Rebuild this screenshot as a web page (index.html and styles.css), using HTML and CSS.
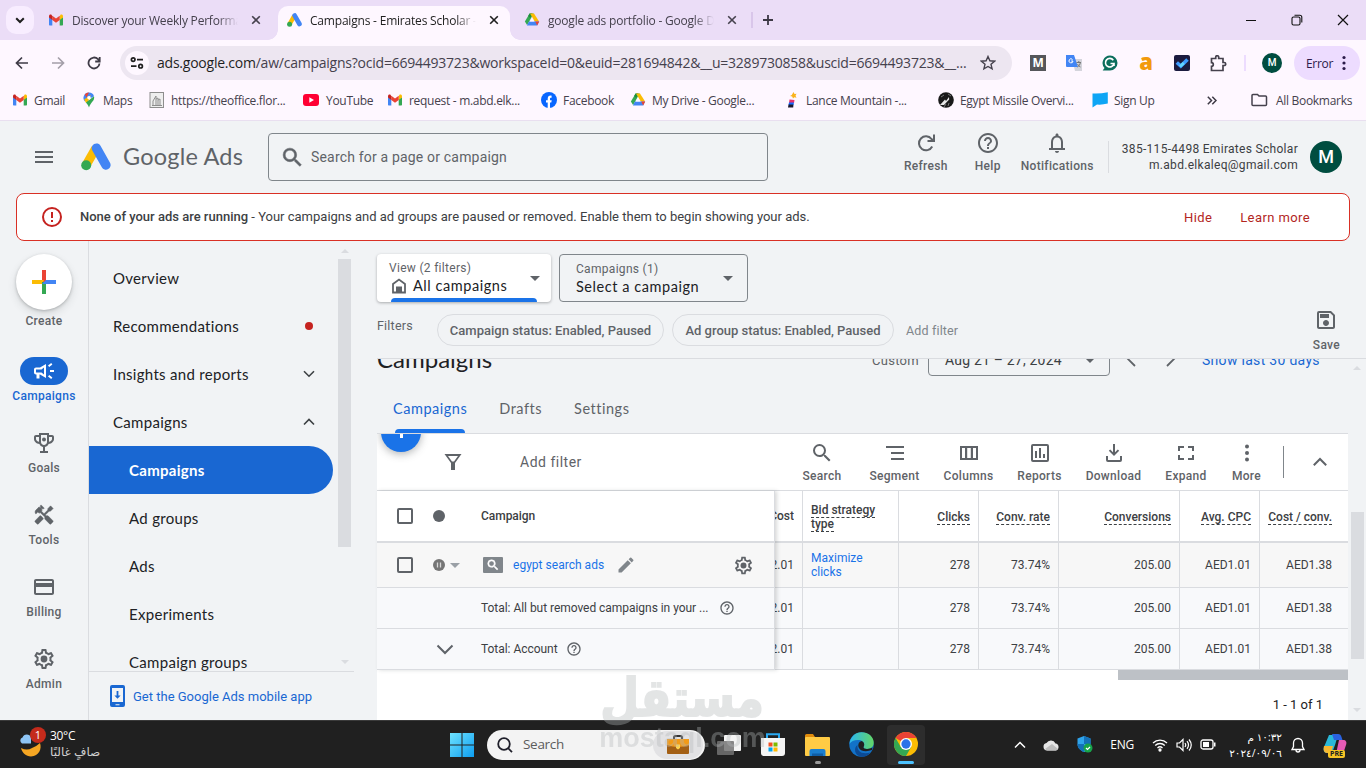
FILE: index.html
```html
<!DOCTYPE html>
<html lang="en">
  <head>
    <meta charset="UTF-8" />
    <meta name="viewport" content="width=device-width, initial-scale=1.0" />
    <title>Campaigns - Emirates Scholar - Google Ads</title>
    <link rel="stylesheet" href="styles.css">
  </head>
  <body>
    <svg class="sprite" width="0" height="0">
      <symbol id="i-search" viewBox="0 0 24 24"><path d="M15.5 14h-.79l-.28-.27A6.47 6.47 0 0 0 16 9.5 6.5 6.5 0 1 0 9.5 16c1.61 0 3.09-.59 4.23-1.57l.27.28v.79l5 4.99L20.49 19l-4.99-5zm-6 0C7.01 14 5 11.99 5 9.5S7.01 5 9.5 5 14 7.01 14 9.5 11.99 14 9.5 14z"/></symbol>
      <symbol id="i-help" viewBox="0 0 24 24"><path d="M11 18h2v-2h-2v2zm1-16C6.48 2 2 6.48 2 12s4.48 10 10 10 10-4.48 10-10S17.52 2 12 2zm0 18c-4.41 0-8-3.59-8-8s3.59-8 8-8 8 3.59 8 8-3.59 8-8 8zm0-14c-2.21 0-4 1.79-4 4h2c0-1.1.9-2 2-2s2 .9 2 2c0 2-3 1.75-3 5h2c0-2.25 3-2.5 3-5 0-2.21-1.79-4-4-4z"/></symbol>
      <symbol id="i-gear" viewBox="0 0 24 24"><path d="M19.43 12.98c.04-.32.07-.64.07-.98 0-.34-.03-.66-.07-.98l2.11-1.65c.19-.15.24-.42.12-.64l-2-3.46a.5.5 0 0 0-.61-.22l-2.49 1c-.52-.4-1.08-.73-1.69-.98l-.38-2.65A.488.488 0 0 0 14 2h-4c-.25 0-.46.18-.49.42l-.38 2.65c-.61.25-1.17.59-1.69.98l-2.49-1a.566.566 0 0 0-.18-.03c-.17 0-.34.09-.43.25l-2 3.46c-.13.22-.07.49.12.64l2.11 1.65c-.04.32-.07.65-.07.98s.03.66.07.98l-2.11 1.65c-.19.15-.24.42-.12.64l2 3.46a.5.5 0 0 0 .61.22l2.49-1c.52.4 1.08.73 1.69.98l.38 2.65c.03.24.24.42.49.42h4c.25 0 .46-.18.49-.42l.38-2.65c.61-.25 1.17-.59 1.69-.98l2.49 1c.06.02.12.03.18.03.17 0 .34-.09.43-.25l2-3.46c.12-.22.07-.49-.12-.64l-2.11-1.65zm-1.98-1.71c.04.31.05.52.05.73s-.02.43-.05.73l-.14 1.13.89.7 1.08.84-.7 1.21-1.27-.51-1.04-.42-.9.68c-.43.32-.84.56-1.25.73l-1.06.43-.16 1.13-.2 1.35h-1.4l-.19-1.35-.16-1.13-1.06-.43c-.43-.18-.83-.41-1.23-.71l-.91-.7-1.06.43-1.27.51-.7-1.21 1.08-.84.89-.7-.14-1.13c-.03-.31-.05-.54-.05-.74s.02-.43.05-.73l.14-1.13-.89-.7-1.08-.84.7-1.21 1.27.51 1.04.42.9-.68c.43-.32.84-.56 1.25-.73l1.06-.43.16-1.13.2-1.35h1.39l.19 1.35.16 1.13 1.06.43c.43.18.83.41 1.23.71l.91.7 1.06-.43 1.27-.51.7 1.21-1.07.85-.89.7.14 1.13z"/><circle cx="12" cy="12" r="3.4"/></symbol>
      <symbol id="i-gmail" viewBox="0 0 16 16"><path fill="#4285f4" d="M1 5v7.6c0 .6.4 1 1 1h2.3V7z"/><path fill="#34a853" d="M15 5v7.6c0 .6-.4 1-1 1h-2.3V7z"/><path fill="#fbbc04" d="M11.7 4.4V8L15 5.6V4.2c0-1.6-1.5-2.1-2.5-1.4z"/><path fill="#ea4335" d="M4.3 8V3.8L8 6.6l3.7-2.8V8L8 10.8z"/><path fill="#c5221f" d="M1 4.2v1.4L4.3 8V4.2l-.8-1.4C2.5 2.1 1 2.6 1 4.2z"/></symbol>
      <symbol id="i-drive" viewBox="0 0 16 16"><path fill="#34a853" d="M5.6 1.5h4L5.2 9.4 3.1 13 .9 9.4z"/><path fill="#1e8e3e" d="M5.6 1.5h2.6l-2 4.6-2-2z"/><path fill="#fbbc04" d="M6 1.5h4l5.1 8h-4.3z"/><path fill="#4285f4" d="M5 9.4h10.1l-2 4.1H2.9z"/><path fill="#ea4335" d="M11.2 9.4h4l-2 4.1z"/><path fill="#fef7ff" d="M8 5.6l2.2 3.8H5.8z"/></symbol>
      <symbol id="i-ads" viewBox="0 0 30 28"><path stroke="#fbbc04" stroke-width="9" d="M14.6 5.6 5.2 22"/><path stroke="#4285f4" stroke-width="9.4" stroke-linecap="round" d="M15.4 5.1 24.9 22"/><circle cx="5.2" cy="22.3" r="5" fill="#34a853"/></symbol>
      <symbol id="i-x" viewBox="0 0 10 10"><path fill="none" stroke="currentColor" stroke-width="1.6" d="M1.2 1.2l7.6 7.6M8.8 1.2L1.2 8.8"/></symbol>
    </svg>

    <div class="tabstrip">
      <div class="tab-search"><svg width="10" height="7" fill="none" stroke="#1f1f1f" stroke-width="2"><path d="M1.2 1.2 5 5l3.8-3.8"/></svg></div>
      <div class="tab">
        <svg width="16" height="16"><use href="#i-gmail"/></svg>
        <span class="tab-title">Discover your Weekly Performance</span>
        <svg class="tab-close" width="10" height="10"><use href="#i-x"/></svg>
      </div>
      <div class="tab active">
        <svg width="15" height="14"><use href="#i-ads"/></svg>
        <span class="tab-title">Campaigns - Emirates Scholar -</span>
        <svg class="tab-close" width="10" height="10"><use href="#i-x"/></svg>
      </div>
      <div class="tab last">
        <svg width="16" height="16"><use href="#i-drive"/></svg>
        <span class="tab-title">google ads portfolio - Google Drive</span>
        <svg class="tab-close" width="10" height="10"><use href="#i-x"/></svg>
      </div>
      <span class="tab-divider"></span>
      <svg class="new-tab" width="12" height="12" stroke="#3c3844" stroke-width="1.8"><path d="M6 1v10M1 6h10"/></svg>
      <div class="window-buttons">
        <svg width="12" height="12" stroke="#111"><path d="M1 6.5h10"/></svg>
        <svg width="12" height="12" fill="none" stroke="#111" stroke-width="1.1"><rect x="1" y="3" width="8" height="8" rx="1.5"/><path d="M3.5 1.2H8.8a2 2 0 0 1 2 2V8.500"/></svg>
        <svg width="12" height="12" stroke="#111" stroke-width="1.2"><path d="M1 1l10 10M11 1L1 11"/></svg>
      </div>
    </div>

    <div class="toolbar">
      <div class="nav-buttons">
        <svg width="14" height="14" fill="none" stroke="#3f3b47" stroke-width="1.7"><path d="M13 7H1.800M7 1.500 1.500 7 7 12.500"/></svg>
        <svg width="14" height="14" fill="none" stroke="#a49fa9" stroke-width="1.7"><path d="M1 7h11.200M7 1.500 12.500 7 7 12.500"/></svg>
        <svg width="14" height="14" fill="none" stroke="#3f3b47" stroke-width="1.8"><path d="M12.500 7.500A5.500 5.500 0 1 1 11 3.200L12.500 5M12.700 1v4.500H8.200"/></svg>
      </div>
      <div class="omnibox">
        <span class="site-info"><svg width="14" height="14" fill="none" stroke="#1f1f1f" stroke-width="1.7"><circle cx="3.200" cy="3.600" r="1.800"/><path d="M7 3.600h6M1 10.200h5.500"/><circle cx="10.600" cy="10.200" r="1.800"/></svg></span>
        <span class="url"><b>ads.google.com</b>/aw/campaigns?ocid=6694493723&amp;workspaceId=0&amp;euid=281694842&amp;__u=3289730858&amp;uscid=6694493723&amp;__...</span>
        <svg width="16" height="16" fill="none" stroke="#45414d" stroke-width="1.400"><path d="M8 1.500l1.900 4.300 4.700.4-3.600 3.100 1.100 4.600L8 11.500l-4.100 2.400L5 9.300 1.400 6.200l4.700-.4z"/></svg>
      </div>
      <div class="extensions">
        <span class="ext-m">M</span>
        <svg width="16" height="16"><path fill="#d4d4dc" d="M6 4h10v12H9z"/><path fill="#4285f4" d="M0 0h8l4 12H1a1 1 0 0 1-1-1z"/><path fill="none" stroke="#fff" d="M6.500 4.500A2 2 0 1 0 7 6H5.200"/><path stroke="#777" fill="none" d="M10.500 7.500h4.500M12.800 6v1.500M14.500 7.500q-.5 3-3 4.500M11.500 9q1 2 3 3"/></svg>
        <svg width="16" height="16"><path fill="#0b6e5c" d="M8 .5A7.500 7.500 0 1 1 8 15.500H.7L2.500 13A7.500 7.500 0 0 1 8 .5z"/><path d="M11.300 5.200A4.300 4.300 0 1 0 12 8.500H8.500M12 8.500V11" fill="none" stroke="#fff" stroke-width="1.600"/></svg>
        <span class="ext-a">a</span>
        <svg width="16" height="16"><rect width="16" height="16" rx="2" fill="#1b1b3f"/><path d="M2.800 7.500 6.800 11 13.500 4.500" fill="none" stroke="#3d9bff" stroke-width="3.600"/><path d="M6 11.500 9.800 8" stroke="#61d6ff" stroke-width="3"/></svg>
        <svg width="17" height="17" fill="none" stroke="#45414d" stroke-width="1.700"><path d="M1.500 3.500h4.200V2.200a1.300 1.300 0 0 1 3 0v1.300h4.300v4h1.200a1.300 1.300 0 0 1 0 3H13v5H1.500v-4.200a1.800 1.800 0 0 0 0-3.600z"/></svg>
      </div>
      <span class="toolbar-divider"></span>
      <span class="profile">M</span>
      <div class="error-chip">Error <svg width="4" height="16" fill="#2b1b4a"><circle cx="2" cy="2.500" r="1.600"/><circle cx="2" cy="8" r="1.600"/><circle cx="2" cy="13.500" r="1.600"/></svg></div>
    </div>

    <div class="bookmarks">
      <div class="bookmark-list">
        <span class="bookmark"><svg width="16" height="16"><use href="#i-gmail"/></svg>Gmail</span>
        <span class="bookmark"><svg width="16" height="16"><path fill="#4285f4" d="M8 .5a5.200 5.200 0 0 1 5 3.700L4 9.500A5.300 5.300 0 0 1 8 .5z"/><path fill="#ea4335" d="M3.800 2.500A5.200 5.200 0 0 1 8 .5L5.500 5.500z"/><path fill="#fbbc04" d="M3.200 7.500 9.800 3 7 10l-2 1z"/><path fill="#34a853" d="M13 4.200c1.200 4.500-3.500 6-5 11.300-.7-2-1.800-3.500-3-5z"/><circle cx="8" cy="5.700" r="1.800" fill="#fff"/></svg>Maps</span>
        <span class="bookmark"><svg width="16" height="16" fill="none" stroke="#8d8d8d"><rect x="1" y=".5" width="13.500" height="15" fill="#eee"/><path d="M4 13V9l3-5v9M7 7l2-1v7M9 8l2-1v6M3 13.500h10"/></svg>https://theoffice.flor...</span>
        <span class="bookmark"><svg width="17" height="16"><rect y="2" width="16" height="12" rx="3" fill="#ff0033"/><path fill="#fff" d="M6.300 5.300 11 8l-4.700 2.700z"/></svg>YouTube</span>
        <span class="bookmark"><svg width="16" height="16"><use href="#i-gmail"/></svg>request - m.abd.elk...</span>
        <span class="bookmark"><svg width="16" height="16"><circle cx="8" cy="8" r="8" fill="#0866ff"/><path fill="#fff" d="M6.700 16v-5.400H5V8.200h1.700V7c0-2.600 1.400-3.700 3.900-3.300v2.100C9.200 5.700 9 6.100 9 7v1.200h1.700l-.4 2.400H9V16z"/></svg>Facebook</span>
        <span class="bookmark"><svg width="16" height="16"><use href="#i-drive"/></svg>My Drive - Google...</span>
        <span class="bookmark"><svg width="16" height="16"><path fill="#f9b31b" d="M9.500 0l1 2 2-.3-1 2 1 2-2.200-.4L9 6.500l-.8-2L6 4l1.800-1z"/><path fill="#e5326e" d="M5.500 7.500l5 .5-.5 3H5z"/><path fill="#1768ff" d="M5 10.500h5L9.500 13h-5z"/><path fill="#181830" d="M4.500 12.500h5l-.3 3H4z"/></svg>Lance Mountain -...</span>
        <span class="bookmark"><svg width="16" height="16"><circle cx="8" cy="8" r="7.800" fill="#191919"/><path d="M2 13 7 7.500l1 1.500 3-4 .2 2.500L6 13z" fill="#e8e8e8"/><path d="M6 15l2-3M10 14l1-3M3 5l3-2M10 2l3 2" stroke="#777"/></svg>Egypt Missile Overvi...</span>
        <span class="bookmark"><svg width="16" height="16"><path fill="#0ea5f5" d="M.5 4.500V1.500Q8 2 15.800.3V11.500Q10 13 5 12.500L.5 15.500z"/></svg>Sign Up</span>
      </div>
      <svg class="overflow" width="10" height="9" fill="none" stroke="#3c3844" stroke-width="1.500"><path d="M.8.8 4.500 4.500.8 8.200M5.300.8 9 4.500 5.300 8.200"/></svg>
      <span class="toolbar-divider"></span>
      <span class="bookmark all"><svg width="17" height="14" fill="none" stroke="#45414d" stroke-width="1.500"><path d="M2 1.500h4.500L8 3h6.500a1 1 0 0 1 1 1v7.500a1 1 0 0 1-1 1H2a1 1 0 0 1-1-1v-9a1 1 0 0 1 1-1z"/></svg>All Bookmarks</span>
    </div>

    <header class="ads-header">
      <svg class="menu" width="20" height="14" fill="#5f6368"><path d="M1 1h18v2H1zM1 6h18v2H1zM1 11h18v2H1z"/></svg>
      <svg class="ads-logo" width="30" height="28"><use href="#i-ads"/></svg>
      <span class="brand">Google Ads</span>
      <div class="search-box"><svg width="25" height="25" fill="#5f6368" stroke="#5f6368" stroke-width=".5"><use href="#i-search"/></svg>Search for a page or campaign</div>
      <div class="header-actions">
        <span class="action"><svg width="24" height="24" fill="none" stroke="#5f6368" stroke-width="2"><path d="M18.200 15.500A7 7 0 1 1 17.500 8l1.500 1.500M20 3.500V10h-6.500"/></svg>Refresh</span>
        <span class="action"><svg width="24" height="24" fill="#5f6368"><use href="#i-help"/></svg>Help</span>
        <span class="action"><svg width="24" height="24" fill="#5f6368"><path d="M12 22c1.100 0 2-.9 2-2h-4c0 1.100.9 2 2 2zm6-5v-6c0-3.070-1.630-5.640-4.500-6.320V4c0-.83-.67-1.500-1.500-1.500s-1.500.67-1.500 1.500v.68C7.640 5.360 6 7.920 6 11v6H4v2h16v-2zm-2 0H8v-6c0-2.480 1.510-4.500 4-4.500s4 2.020 4 4.500z"/></svg>Notifications</span>
      </div>
      <div class="account">
        <div>385-115-4498 Emirates Scholar</div>
        <div>m.abd.elkaleq@gmail.com</div>
      </div>
      <span class="avatar">M</span>
    </header>

    <div class="alert">
      <svg width="24" height="24" fill="#c5221f"><path d="M11 15h2v2h-2v-2zm0-8h2v6h-2V7zm1-5a10 10 0 1 0 0 20 10 10 0 0 0 0-20zm0 18a8 8 0 1 1 0-16 8 8 0 0 1 0 16z"/></svg>
      <p><b>None of your ads are running</b> - Your campaigns and ad groups are paused or removed. Enable them to begin showing your ads.</p>
      <a class="hide">Hide</a>
      <a>Learn more</a>
    </div>

    <main class="main">
      <nav class="rail">
        <div class="create"><svg width="24" height="24"><path fill="#ea4335" d="M10 0h4v12l-4 0z"/><path fill="#fbbc04" d="M0 10h12l-2 4H0z"/><path fill="#34a853" d="M10 12h4v12h-4z"/><path fill="#4285f4" d="M24 10H14l-4 4h14z"/></svg></div>
        <span class="rail-label">Create</span>
        <div class="rail-item current">
          <span class="rail-icon"><svg width="24" height="24" fill="#fff"><path d="M18 11v2h4v-2h-4zm-2 6.600 3.200 2.400 1.200-1.600-3.200-2.400zM20.400 5.600 19.200 4 16 6.400 17.200 8zM4 8.500c-1.100 0-2 .9-2 2v3c0 1.100.9 2 2 2h.500v4h3v-4h.5l6 3.500V5L8 8.500H4zm8 0v7l-2.500-2H4v-3h5.500z"/></svg></span>
          Campaigns
        </div>
        <div class="rail-item">
          <span class="rail-icon"><svg width="24" height="24" fill="#5f6368"><path d="M19 4h-2V2H7v2H4c-1.100 0-2 .9-2 2v2c0 2.550 2.300 4.630 5.390 4.940.63 1.500 1.980 2.630 3.610 2.960V20H8v2h8v-2h-3v-4.100c1.630-.33 2.980-1.460 3.610-2.960C19.700 12.630 22 10.550 22 8V6c0-1.100-.9-2-2-2zM4 8V6h3v4.820C5.500 10.400 4 9.300 4 8zm8 6c-1.650 0-3-1.350-3-3V4h6v7c0 1.650-1.350 3-3 3zm8-6c0 1.300-1.500 2.400-3 2.820V6h3z"/><circle cx="12" cy="8.500" r="2"/></svg></span>
          Goals
        </div>
        <div class="rail-item">
          <span class="rail-icon"><svg width="22" height="22" viewBox="0 0 24 24" fill="#5f6368" stroke="#5f6368" stroke-width=".5"><g transform="matrix(-1 0 0 1 24 0)"><path d="M21.670 18.170l-5.300-5.300h-.99l-2.540 2.540v.99l5.300 5.300c.39.39 1.020.39 1.410 0l2.120-2.120c.39-.38.39-1.020 0-1.410z"/><path d="M17.340 10.190l1.410-1.410 2.120 2.120c1.170-1.170 1.170-3.070 0-4.240l-3.540-3.540-1.410 1.410V1.710L15.220 1l-3.540 3.540.71.71h2.830l-1.410 1.410 1.060 1.060-2.890 2.890-4.130-4.130V5.060L4.830 2.040 2 4.870 5.030 7.900h1.410l4.130 4.130-.85.85H7.600l-5.300 5.300c-.39.39-.39 1.020 0 1.410l2.120 2.120c.39.39 1.020.39 1.410 0l5.300-5.300v-2.120l5.150-5.150z"/></g></svg></span>
          Tools
        </div>
        <div class="rail-item">
          <span class="rail-icon"><svg width="24" height="24" fill="#5f6368"><path d="M20 4H4c-1.110 0-2 .89-2 2v12c0 1.110.89 2 2 2h16c1.110 0 2-.89 2-2V6c0-1.110-.89-2-2-2zm0 14H4v-6h16v6zm0-10H4V6h16v2z"/></svg></span>
          Billing
        </div>
        <div class="rail-item">
          <span class="rail-icon"><svg width="24" height="24" fill="#5f6368"><use href="#i-gear"/></svg></span>
          Admin
        </div>
      </nav>

      <div class="sidebar">
        <div class="sidebar-scroll">
          <ul class="menu-list">
            <li>Overview</li>
            <li>Recommendations<span class="red-dot"></span></li>
            <li>Insights and reports<svg width="12" height="8" fill="none" stroke="#3c4043" stroke-width="1.600"><path d="M1 1.200l5 5 5-5"/></svg></li>
            <li>Campaigns<svg width="12" height="8" fill="none" stroke="#3c4043" stroke-width="1.600"><path d="M1 6.500l5-5 5 5"/></svg></li>
            <li class="sub selected">Campaigns</li>
            <li class="sub">Ad groups</li>
            <li class="sub">Ads</li>
            <li class="sub">Experiments</li>
            <li class="sub">Campaign groups</li>
          </ul>
          <div class="scrollbar side">
            <i class="arrow-up"></i><span class="thumb"></span><i class="arrow-down"></i>
          </div>
        </div>
        <a class="mobile-app"><svg width="15" height="22" fill="#1967d2"><path d="M2 0h11a2 2 0 0 1 2 2v18a2 2 0 0 1-2 2H2a2 2 0 0 1-2-2V2a2 2 0 0 1 2-2zm0 3v14h11V3zm3.500 16.200v1h4v-1zM6.600 6h1.800v4.500h2.200L7.500 13.800l-3.100-3.300h2.200z" fill-rule="evenodd"/></svg>Get the Google Ads mobile app</a>
      </div>

      <section class="content">
        <div class="filter-bar">
          <div class="selectors">
            <div class="view-card">
              <div>
                <small>View (2 filters)</small>
                <strong><svg width="16" height="16" fill="none" stroke="#5f6368" stroke-width="1.800"><path d="M2 14.500V6l6-4.500L14 6v8.500z"/><path fill="#5f6368" stroke="none" d="M5 8.500h6V15H5z"/></svg>All campaigns</strong>
              </div>
              <i class="caret"></i>
            </div>
            <div class="campaign-select">
              <div>
                <small>Campaigns (1)</small>
                <strong>Select a campaign</strong>
              </div>
              <i class="caret"></i>
            </div>
          </div>
          <div class="chips">
            <span class="chips-label">Filters</span>
            <span class="chip chip-a">Campaign status: Enabled, Paused</span>
            <span class="chip chip-b">Ad group status: Enabled, Paused</span>
            <span class="add">Add filter</span>
            <span class="save"><svg width="24" height="24" fill="#5f6368"><path d="M17 3H5a2 2 0 0 0-2 2v14c0 1.100.9 2 2 2h14c1.100 0 2-.9 2-2V7l-4-4zm2 16H5V5h11.200L19 7.800V19zM12 12c-1.660 0-3 1.340-3 3s1.340 3 3 3 3-1.340 3-3-1.340-3-3-3zM6 6h9v4H6z"/></svg>Save</span>
          </div>
        </div>

        <div class="scroll-area">
          <div class="page">
            <div class="title-row">
              <h1>Campaigns</h1>
              <span class="custom">Custom</span>
              <span class="date-range">Aug 21 – 27, 2024<i class="caret"></i></span>
              <svg class="prev" width="10" height="16" fill="none" stroke="#5f6368" stroke-width="1.800"><path d="M9 1 2 8l7 7"/></svg>
              <svg class="next" width="10" height="16" fill="none" stroke="#5f6368" stroke-width="1.800"><path d="M1 1l7 7-7 7"/></svg>
              <a>Show last 30 days</a>
            </div>
            <div class="page-tabs">
              <span class="page-tab on">Campaigns</span>
              <span class="page-tab">Drafts</span>
              <span class="page-tab">Settings</span>
            </div>

            <div class="panel">
              <div class="table-tools">
                <span class="fab-clip"><span class="fab"></span></span>
                <svg class="funnel" width="18" height="18" fill="#5f6368"><path fill-rule="evenodd" d="M.5 1h17L11 10v7H7v-7zM4 3l4 5.500h2L14 3z"/></svg>
                <span class="tools-filter">Add filter</span>
                <div class="tool-list">
                  <span class="action"><svg width="24" height="24" fill="#5f6368"><use href="#i-search"/></svg>Search</span>
                  <span class="action"><svg width="24" height="24" fill="#5f6368"><path d="M3 5h18v2H3zM8 11h13v2H8zM8 17h13v2H8z"/></svg>Segment</span>
                  <span class="action"><svg width="24" height="24" fill="#5f6368"><path fill-rule="evenodd" d="M3 5h18v14H3zm2 2v10h3V7zm5.200 0v10h3.600V7zM16 7v10h3V7z"/></svg>Columns</span>
                  <span class="action"><svg width="24" height="24" fill="#5f6368"><path fill-rule="evenodd" d="M5 3h14a2 2 0 0 1 2 2v14a2 2 0 0 1-2 2H5a2 2 0 0 1-2-2V5a2 2 0 0 1 2-2zm0 2v14h14V5zm2 5h2v7H7zm4-3h2v10h-2zm4 6h2v4h-2z"/></svg>Reports</span>
                  <span class="action"><svg width="24" height="24" fill="#5f6368"><path d="M11 3h2v8.200l2.800-2.800 1.400 1.400L12 15 6.800 9.800l1.400-1.400 2.800 2.800zM4 15h2v4h12v-4h2v4a2 2 0 0 1-2 2H6a2 2 0 0 1-2-2z"/></svg>Download</span>
                  <span class="action"><svg width="24" height="24" fill="#5f6368"><path d="M4 5h6v2H6v3H4zM14 5h6v5h-2V7h-4zM4 14h2v3h4v2H4zM18 14h2v5h-6v-2h4z"/></svg>Expand</span>
                  <span class="action"><svg width="24" height="24" fill="#5f6368"><circle cx="12" cy="5.500" r="2"/><circle cx="12" cy="12" r="2"/><circle cx="12" cy="18.500" r="2"/></svg>More</span>
                </div>
                <span class="tools-divider"></span>
                <svg class="collapse" width="16" height="10" fill="none" stroke="#5f6368" stroke-width="2"><path d="M1.800 8.200 8 2l6.200 6.200"/></svg>
              </div>

              <div class="grid">
                <div class="frozen">
                  <div class="row head"><span class="box"></span><span class="status"><i class="dot"></i></span><span class="name">Campaign</span></div>
                  <div class="row campaign">
                    <span class="box"></span>
                    <span class="status"><svg width="12" height="12"><circle cx="6" cy="6" r="6" fill="#757575"/><path d="M4.500 3.500v5M7.500 3.500v5" stroke="#d8d8d8" stroke-width="1.300"/></svg><i class="caret light"></i></span>
                    <span class="name">
                      <span class="type"><svg width="14" height="14" fill="#fff" stroke="#fff"><use href="#i-search"/></svg></span>
                      <a>egypt search ads</a>
                      <svg class="pencil" width="20" height="20" viewBox="0 0 24 24" fill="#80868b"><path d="M3 17.250V21h3.750L17.810 9.940l-3.750-3.750L3 17.250zM20.710 7.040a1 1 0 0 0 0-1.410l-2.340-2.340a1 1 0 0 0-1.410 0l-1.830 1.830 3.750 3.750 1.830-1.830z"/></svg>
                      <svg class="cog" width="21" height="21" fill="#5f6368"><use href="#i-gear"/></svg>
                    </span>
                  </div>
                  <div class="row total"><span></span><span></span><span class="name">Total: All but removed campaigns in your ...<svg class="tip" width="16" height="16" fill="#5f6368"><use href="#i-help"/></svg></span></div>
                  <div class="row total"><span></span><span class="status expand"><svg width="18" height="11" fill="none" stroke="#5f6368" stroke-width="2"><path d="M1.500 1.500 9 9l7.500-7.500"/></svg></span><span class="name">Total: Account<svg class="tip near" width="16" height="16" fill="#5f6368"><use href="#i-help"/></svg></span></div>
                </div>
                <table class="metrics">
                  <colgroup><col class="c-cost"><col class="c-bid"><col class="c-sm"><col class="c-sm"><col class="c-conv"><col class="c-sm"><col></colgroup>
                  <thead>
                    <tr>
                      <th class="cut"><div>Cost</div></th>
                      <th class="left"><u>Bid strategy</u><br><u>type</u></th>
                      <th><u>Clicks</u></th>
                      <th><u>Conv. rate</u></th>
                      <th><u>Conversions</u></th>
                      <th><u>Avg. CPC</u></th>
                      <th><u>Cost / conv.</u></th>
                    </tr>
                  </thead>
                  <tbody>
                    <tr class="campaign">
                      <td class="cut"><div>AED282.01</div></td>
                      <td class="left"><a>Maximize<br>clicks</a></td>
                      <td>278</td><td>73.74%</td><td>205.00</td><td>AED1.01</td><td>AED1.38</td>
                    </tr>
                    <tr class="total">
                      <td class="cut"><div>AED282.01</div></td>
                      <td></td>
                      <td>278</td><td>73.74%</td><td>205.00</td><td>AED1.01</td><td>AED1.38</td>
                    </tr>
                    <tr class="total">
                      <td class="cut"><div>AED282.01</div></td>
                      <td></td>
                      <td>278</td><td>73.74%</td><td>205.00</td><td>AED1.01</td><td>AED1.38</td>
                    </tr>
                  </tbody>
                </table>
              </div>
              <div class="h-scroll"></div>
              <div class="pager">1 - 1 of 1</div>
            </div>
          </div>
          <div class="scrollbar page-bar">
            <i class="arrow-up"></i><span class="thumb"></span><i class="arrow-down"></i>
          </div>
        </div>
      </section>
    </main>

    <footer class="taskbar">
      <div class="weather">
        <span class="weather-icon">
          <svg width="28" height="28"><path fill="#f5a623" d="M4 17q6 3 11 0 5-2 8-5c2 6-1 13-9 13.500-5 0-9-4-10-8.500z"/><path fill="#8ec5f5" d="M5 12.500a3.300 3.300 0 0 1 .5-6A4.500 4.500 0 0 1 14 6.500v6z"/></svg>
          <b class="badge">1</b>
        </span>
        <span class="weather-text">30°C<br><span lang="ar">صافٍ غالبًا</span></span>
      </div>
      <svg class="start" width="24" height="24"><defs><linearGradient id="g-win" x1="0" y1="0" x2="1" y2="1"><stop offset="0" stop-color="#6fe3ff"/><stop offset="1" stop-color="#0d9df0"/></linearGradient></defs><path fill="url(#g-win)" d="M0 0h11.500v11.500H0zM12.500 0H24v11.500H12.500zM0 12.500h11.500V24H0zM12.500 12.500H24V24H12.500z"/></svg>
      <div class="task-search">
        <svg width="16" height="16" fill="none" stroke="#1f1f2a" stroke-width="1.800"><circle cx="7" cy="7" r="5.800"/><path d="M11 11l4 4.200"/></svg>
        <span class="hint">Search</span>
        <span class="case"><svg width="24" height="20"><path d="M8 4V2.500A1.500 1.500 0 0 1 9.500 1h5A1.500 1.500 0 0 1 16 2.500V4" fill="none" stroke="#333" stroke-width="2"/><rect x="1" y="4" width="22" height="15" rx="1" fill="#a35f14"/><path fill="#f29a17" d="M1 4h22v6q-11 4-22 0z"/><path fill="#ffd34d" d="M10 9.500h4V13l-2 1.500-2-1.500z"/></svg></span>
      </div>
      <svg class="app view" width="24" height="24"><rect x="7" y="2" width="17" height="16" rx="1" fill="#f4f4f4"/><rect y="8" width="17" height="14" rx="1" fill="#737373" opacity=".85"/></svg>
      <svg class="app store" width="24" height="24"><path d="M6 7V1.200h12V7" fill="none" stroke="#29a9f2" stroke-width="2"/><path fill="#f5f5f5" d="M0 5h24v15a3 3 0 0 1-3 3H3a3 3 0 0 1-3-3z"/><path fill="#f25022" d="M7.500 9.500h4v4h-4z"/><path fill="#7fba00" d="M12.500 9.500h4v4h-4z"/><path fill="#00a4ef" d="M7.500 14.500h4v4h-4z"/><path fill="#ffb900" d="M12.500 14.500h4v4h-4z"/></svg>
      <div class="app folder"><svg width="25" height="22"><path fill="#e08b0c" d="M0 1.500A1.500 1.500 0 0 1 1.500 0H8l2 3v4H0z"/><rect y="3" width="25" height="19" rx="1" fill="#ffcb45"/><path fill="#1a7fd0" d="M4.500 17a2 2 0 0 1 2-2h12a2 2 0 0 1 2 2v5h-16z"/><path fill="#0f5ea6" d="M7 19.500h11V22H7z"/></svg><i></i></div>
      <svg class="app edge" width="25" height="25"><defs><linearGradient id="g-edge"><stop offset="0" stop-color="#2bb7f0"/><stop offset="1" stop-color="#63d665"/></linearGradient></defs><circle cx="12.500" cy="12.500" r="12.200" fill="#1272c8"/><path fill="url(#g-edge)" d="M.5 12C1 5 6.500.3 12.500.3 19.500.3 25 5 24.700 11c-.2 4-3.200 6-6.700 6-2.500 0-4-1-3.500-2 1.500-2 .5-6.500-4.500-7C6 7.600 2 9 .5 12z"/><path fill="#0c4a94" d="M8.500 13c-1 6 4.500 10 13 7.500C19 24 15.500 25 12 24.700 6 24 4 16 8.500 13z"/><path fill="#202020" d="M14.500 15c1.500-2 .8-5-2-6 -3 1-4 4-2.500 7 2 3.500 7.500 4 13 2l.5-2.500c-3 2-9.500 2-9-.5z"/></svg>
      <div class="app chrome"><svg width="24" height="24" viewBox="0 0 48 48"><circle cx="24" cy="24" r="24" fill="#fbbc04"/><path fill="#ea4335" d="M24 24 3.200 12A24 24 0 0 1 44.800 12H24z"/><path fill="#34a853" d="M24 24 13.600 30 3.200 12A24 24 0 0 0 24 48l10.400-18z"/><circle cx="24" cy="24" r="12" fill="#fff"/><circle cx="24" cy="24" r="9.300" fill="#2b72e8"/></svg><i></i></div>
      <div class="tray">
        <svg width="12" height="8" fill="none" stroke="#fff" stroke-width="1.500"><path d="M1 6.500l5-5 5 5"/></svg>
        <svg width="17" height="12"><path fill="#e6e6e6" d="M4 11.500A3.800 3.800 0 0 1 3.500 4 5 5 0 0 1 12.500 4.500 3.600 3.600 0 0 1 13 11.500z"/><path fill="#bdbdbd" d="M2 10l7-5 6 5-2 1.500H4z"/></svg>
        <svg width="16" height="17"><path fill="#2fa4ec" d="M7 0l6.500 2.500V8c0 4-3 6.500-6.500 8C3.500 14.500.5 12 .5 8V2.500z"/><path fill="#1470b8" d="M7 0l6.500 2.500V8H7zM.5 8H7v8C3.500 14.500.5 12 .5 8z"/><circle cx="11" cy="12" r="4.500" fill="#17a34a"/><path d="M9 12l1.500 1.500L13 11" fill="none" stroke="#fff" stroke-width="1.200"/></svg>
        <span class="lang">ENG</span>
        <svg width="16" height="14" fill="none" stroke="#fff" stroke-width="1.300"><path d="M1 5a10 10 0 0 1 14 0M3.200 7.500a6.800 6.800 0 0 1 9.600 0M5.500 10a3.600 3.600 0 0 1 5 0"/><circle cx="8" cy="12" r="1" fill="#fff"/></svg>
        <svg width="16" height="14" fill="none" stroke="#fff" stroke-width="1.200"><path d="M1 5h2.500L7 1.500v11L3.500 9H1zM9 5q1.500 2 0 4M11 3.200q3 3.800 0 7.600M13 1.500q4.500 5.500 0 11"/></svg>
        <svg width="16" height="11" fill="none" stroke="#fff" stroke-width="1.300"><rect x="1" y="1" width="12" height="9" rx="2"/><path fill="#fff" stroke="none" d="M3 3h6v5H3zM14 3.500h1.500v4H14z"/></svg>
        <span class="clock" lang="ar">١٠:٣٢ م<br>٢٠٢٤/٠٩/٠٦</span>
        <svg width="14" height="16" fill="none" stroke="#fff" stroke-width="1.300"><path d="M1 12.500 2.500 9.500V6a4.500 4.500 0 0 1 9 0v3.500l1.500 3zM5 13a2 2 0 0 0 4 0"/></svg>
        <span class="copilot">
          <svg width="24" height="24"><path fill="#2bb8d8" d="M6 2h9l-3 10-3 8H4c-3 0-4-3-3-6z"/><path fill="#2a62e0" d="M9 1h6c2 0 3 1 3.500 3l1 3H11z"/><path fill="#e65bb5" d="M16 7h4c3 0 4 2 3 5l-2 6c-.5 2-2 3-4 3h-4z"/><path fill="#f7b733" d="M1 13h9l-2 7H4c-3 0-4-3-3-7z"/></svg>
          <b>PRE</b>
        </span>
      </div>
    </footer>

    <div class="watermark"><span class="arabic" lang="ar">مستقل</span><span class="latin">mostaql.com</span></div>
  </body>
</html>
```
FILE: styles.css
```css
* {
  box-sizing: border-box;
}

body {
  margin: 0;
  width: 1366px;
  height: 768px;
  overflow: hidden;
  display: flex;
  flex-direction: column;
  background-color: #f1f3f5;
  font-family: Roboto, "Liberation Sans", sans-serif;
  color: #3c4043;
}

svg {
  display: block;
  flex: none;
}

.sprite {
  position: absolute;
}

/* browser tabs */
.tabstrip {
  height: 40px;
  flex: none;
  display: flex;
  align-items: center;
  background-color: #ebddf7;
  padding-left: 6px;
}

.tabstrip,
.toolbar,
.bookmarks {
  font-family: "Open Sans", "Noto Sans", sans-serif;
  font-size: 12px;
  letter-spacing: -0.3px;
  color: #45414d;
}

.tab-search {
  width: 28px;
  height: 28px;
  border-radius: 10px;
  background-color: #f8edff;
  display: flex;
  align-items: center;
  justify-content: center;
}

.tab {
  width: 232px;
  height: 34px;
  display: flex;
  align-items: center;
  margin-top: 6px;
  padding: 0 11px 6px 9px;
  gap: 7px;
}

.tab:nth-child(2) {
  width: 230px;
  margin-left: 14px;
  padding-left: 0;
  padding-right: 17px;
  gap: 8px;
}

.tab.active {
  position: relative;
  background-color: #fef7ff;
  border-radius: 10px 10px 0 0;
  color: #1f1f1f;
  gap: 8px;
}

.tab.active::before,
.tab.active::after {
  content: "";
  position: absolute;
  bottom: 0;
  left: -10px;
  width: 10px;
  height: 10px;
  background: radial-gradient(circle at 0 0, transparent 9.5px, #fef7ff 10px);
}

.tab.active::after {
  left: auto;
  right: -10px;
  background: radial-gradient(circle at 100% 0, transparent 9.5px, #fef7ff 10px);
}

.tab.last {
  width: 241px;
  padding-left: 14px;
  padding-right: 14px;
  gap: 8px;
}

.tab-title {
  flex: 1;
  overflow: hidden;
  white-space: nowrap;
  margin-right: 5px;
  letter-spacing: -0.2px;
  -webkit-mask-image: linear-gradient(to right, #000 88%, transparent);
  mask-image: linear-gradient(to right, #000 88%, transparent);
}

.tab-divider {
  width: 2px;
  height: 16px;
  background-color: #d9c6ea;
}

.new-tab {
  margin-left: 9px;
}

.window-buttons {
  margin-left: auto;
  display: flex;
  gap: 34px;
  padding-right: 17px;
}

/* address bar */
.toolbar {
  height: 46px;
  flex: none;
  display: flex;
  align-items: center;
  background-color: #fef7ff;
  padding-right: 6px;
}

.nav-buttons {
  display: flex;
  gap: 22px;
  width: 120px;
  padding-left: 15px;
}

.omnibox {
  width: 892px;
  height: 34px;
  border-radius: 17px;
  background-color: #ede6f1;
  display: flex;
  align-items: center;
  padding: 0 16px 0 5px;
}

.site-info {
  width: 24px;
  height: 24px;
  border-radius: 12px;
  background-color: #fef7ff;
  display: flex;
  align-items: center;
  justify-content: center;
}

.url {
  flex: 1;
  margin-left: 8px;
  padding-bottom: 2px;
  font-size: 14px;
  letter-spacing: -0.23px;
  white-space: nowrap;
}

.url b {
  font-weight: normal;
  color: #1f1f1f;
}

.extensions {
  display: flex;
  gap: 20px;
  margin-left: 18px;
}

.ext-m {
  width: 16px;
  height: 16px;
  background-color: #55565a;
  color: #fff;
  font: bold 12px/16px "Open Sans", sans-serif;
  text-align: center;
}

.ext-a {
  width: 16px;
  color: #f29a0c;
  font: 800 22px/13px "Open Sans", sans-serif;
  text-align: center;
}

.toolbar-divider {
  width: 2px;
  height: 16px;
  background-color: #eddcff;
}

.toolbar .toolbar-divider {
  margin-left: 17px;
}

.profile {
  width: 20px;
  height: 20px;
  border-radius: 10px;
  margin-left: 16px;
  background-color: #004d40;
  color: #fff;
  font: 500 10px/20px Roboto, sans-serif;
  text-align: center;
}

.error-chip {
  margin-left: auto;
  width: 66px;
  height: 34px;
  border-radius: 17px;
  background-color: #eddcff;
  color: #2b1b4a;
  display: flex;
  align-items: center;
  justify-content: space-between;
  padding: 0 14px 0 12px;
}

/* bookmarks */
.bookmarks {
  height: 35px;
  flex: none;
  display: flex;
  align-items: center;
  background-color: #fef7ff;
  border-bottom: 1px solid #e9dff0;
  padding: 0 15px 6px 12px;
}

.bookmark-list {
  display: grid;
  grid-template-columns: 69px 68px 154px 84px 154px 89px 154px 154px 154px 115px;
}

.bookmark {
  display: flex;
  align-items: center;
  gap: 6px;
  white-space: nowrap;
}

.bookmark.all {
  margin-left: 16px;
  gap: 8px;
}

.bookmarks .overflow {
  margin-right: 18px;
}

/* ads header */
.ads-header {
  height: 72px;
  flex: none;
  display: flex;
  align-items: center;
  padding: 0 24px 0 34px;
}

.ads-logo {
  margin-left: 27px;
}

.brand {
  width: 157px;
  padding: 0 0 2px 12px;
  font-family: Lato, sans-serif;
  font-size: 23.5px;
  letter-spacing: 0.2px;
  color: #5f6368;
  white-space: nowrap;
}

.search-box {
  width: 500px;
  height: 48px;
  border: 1px solid #80868b;
  border-radius: 4px;
  display: flex;
  align-items: center;
  gap: 6px;
  padding-left: 11px;
  font-size: 14px;
  letter-spacing: 0.18px;
  color: #5f6368;
}

.header-actions {
  margin-left: auto;
  display: flex;
  gap: 17px;
}

.action {
  display: flex;
  flex-direction: column;
  align-items: center;
  gap: 3px;
  font-size: 12px;
  font-weight: 500;
  line-height: 16px;
  letter-spacing: 0.3px;
  color: #5f6368;
}

.header-actions .action {
  min-width: 44px;
  margin-top: -9px;
}

.header-actions .action:nth-child(2) {
  min-width: 46px;
  margin-right: -7px;
}

.account {
  margin-left: 14px;
  padding-left: 13px;
  border-left: 1px solid #dadce0;
  font-size: 12px;
  line-height: 16px;
  letter-spacing: 0.3px;
  text-align: right;
}

.avatar {
  width: 32px;
  height: 32px;
  border-radius: 16px;
  margin-left: 12px;
  background-color: #004d40;
  color: #fff;
  font-size: 18px;
  font-weight: 500;
  line-height: 32px;
  text-align: center;
}

.alert {
  height: 48px;
  flex: none;
  margin: 0 16px;
  border: 1px solid #d93025;
  border-radius: 8px;
  background-color: #fff;
  display: flex;
  align-items: center;
  padding: 0 39px 0 23px;
  font-size: 13px;
}

.alert p {
  flex: 1;
  margin: 0 0 2px 16px;
}

.alert b {
  font-weight: 500;
}

.alert a {
  color: #b3261e;
  letter-spacing: 0.4px;
}

.alert .hide {
  margin-right: 28px;
}

/* body of the page */
.main {
  height: 479px;
  flex: none;
  display: flex;
}

.rail {
  width: 89px;
  border-right: 1px solid #dadce0;
  display: flex;
  flex-direction: column;
  align-items: center;
  padding-top: 13px;
  font-size: 12px;
  line-height: 16px;
  font-weight: 500;
  letter-spacing: 0.3px;
  color: #5f6368;
}

.create {
  width: 56px;
  height: 56px;
  flex: none;
  border-radius: 28px;
  background-color: #fff;
  box-shadow: 0 1px 3px rgba(60, 64, 67, 0.3), 0 4px 8px rgba(60, 64, 67, 0.15);
  display: flex;
  align-items: center;
  justify-content: center;
}

.rail-label {
  margin: 3px 0 28px;
}

.rail-item {
  height: 72px;
  flex: none;
  display: flex;
  flex-direction: column;
  align-items: center;
  gap: 3px;
}

.rail-icon {
  width: 48px;
  height: 28px;
  border-radius: 14px;
  display: flex;
  align-items: center;
  justify-content: center;
}

.rail-item.current {
  color: #1967d2;
}

.rail-item.current .rail-icon {
  background-color: #1967d2;
}

.sidebar {
  width: 265px;
  display: flex;
  flex-direction: column;
}

.sidebar-scroll {
  height: 430px;
  overflow: hidden;
  display: flex;
}

.menu-list {
  width: 244px;
  margin: 0;
  padding: 13px 0 0;
  list-style: none;
  font-family: Lato, sans-serif;
  font-size: 15px;
  letter-spacing: 0.3px;
  color: #202124;
}

.menu-list li {
  height: 48px;
  display: flex;
  align-items: center;
  justify-content: space-between;
  padding: 0 18px 1px 24px;
}

.menu-list .sub {
  padding-left: 40px;
}

.menu-list .selected {
  border-radius: 0 24px 24px 0;
  background-color: #1967d2;
  color: #fff;
  font-weight: bold;
}

.red-dot {
  width: 8px;
  height: 8px;
  border-radius: 4px;
  margin-right: 2px;
  background-color: #c5221f;
}

.scrollbar {
  display: flex;
  flex-direction: column;
  align-items: center;
}

.scrollbar .thumb {
  width: 13px;
  background-color: #dadce0;
}

.arrow-up,
.arrow-down {
  border: 4px solid transparent;
  border-top-width: 0;
  border-bottom: 4px solid #dadce0;
}

.arrow-down {
  border-bottom-width: 0;
  border-top: 4px solid #dadce0;
  margin-top: auto;
}

.scrollbar.side {
  width: 13px;
  margin-left: 5px;
  padding: 8px 0 7px;
}

.side .thumb {
  height: 288px;
  margin-top: 6px;
}

.mobile-app {
  height: 49px;
  border-top: 1px solid #dadce0;
  display: flex;
  align-items: center;
  gap: 8px;
  padding-left: 21px;
  font-size: 13px;
  color: #1967d2;
}

.content {
  width: 1012px;
  display: flex;
  flex-direction: column;
}

.filter-bar {
  height: 118px;
  flex: none;
  margin-left: 23px;
  padding-top: 13px;
  border-bottom: 1px solid #dadce0;
}

.selectors {
  display: flex;
  gap: 8px;
}

.view-card,
.campaign-select {
  height: 48px;
  border-radius: 4px;
  display: flex;
  align-items: center;
  justify-content: space-between;
}

.view-card {
  position: relative;
  width: 174px;
  background-color: #fff;
  box-shadow: 0 1px 3px rgba(60, 64, 67, 0.4);
  padding: 0 11px 0 12px;
}

.view-card::after {
  content: "";
  position: absolute;
  left: 14px;
  bottom: 0;
  width: 146px;
  height: 4px;
  border-radius: 4px 4px 0 0;
  background-color: #1a73e8;
}

.campaign-select {
  width: 189px;
  border: 1px solid #80868b;
  padding: 0 14px 0 16px;
}

.selectors small {
  display: block;
  font-size: 12px;
  line-height: 17px;
  letter-spacing: 0.3px;
  color: #5f6368;
}

.selectors strong {
  display: flex;
  align-items: center;
  gap: 6px;
  font: 14.5px/18px Lato, sans-serif;
  letter-spacing: 0.55px;
  color: #202124;
}

.view-card strong svg {
  margin-left: 2px;
}

.view-card > div {
  margin-top: -1px;
}

.caret {
  border: 5px solid transparent;
  border-top-color: #5f6368;
  border-bottom-width: 0;
}

.caret.light {
  border-top-color: #9aa0a6;
}

.chips {
  display: flex;
  align-items: center;
  height: 56px;
  font-size: 13px;
  color: #5f6368;
}

.chips-label {
  width: 60px;
  font-size: 12.5px;
  margin-top: -9px;
  letter-spacing: 0.2px;
}

.chip {
  height: 32px;
  border: 1px solid #dadce0;
  border-radius: 16px;
  font-weight: 500;
  line-height: 31px;
  text-align: center;
  white-space: nowrap;
}

.chip-a {
  width: 227px;
}

.chip-b {
  width: 222px;
  margin-left: 8px;
}

.add {
  margin-left: 12px;
  font-size: 12.5px;
  letter-spacing: 0.15px;
  color: #80868b;
}

.save {
  margin-left: auto;
  margin-right: 26px;
  display: flex;
  flex-direction: column;
  align-items: center;
  gap: 5px;
  font-size: 12px;
  font-weight: 500;
  line-height: 16px;
  letter-spacing: 0.3px;
}

.scroll-area {
  height: 361px;
  overflow: hidden;
  display: flex;
  padding-left: 23px;
}

.page {
  width: 971px;
  flex: none;
}

/* scrolled halfway under the filter bar */
.title-row {
  height: 48px;
  margin-top: -31px;
  display: flex;
  align-items: center;
  font-size: 13px;
  color: #5f6368;
}

.title-row h1 {
  flex: 1;
  margin: 14px 0 0;
  font: 24px/28px Lato, sans-serif;
  color: #202124;
}

.custom {
  margin-top: 16px;
  letter-spacing: 0.3px;
}

.date-range {
  width: 182px;
  height: 48px;
  margin-left: 9px;
  border: 1px solid #80868b;
  border-radius: 4px;
  display: flex;
  align-items: center;
  justify-content: space-between;
  padding: 16px 14px 0 16px;
  font-size: 14px;
  letter-spacing: 0.2px;
  color: #3c4043;
}

.prev {
  margin: 14px 0 0 16px;
}

.next {
  margin: 14px 0 0 30px;
}

.title-row a {
  width: 120px;
  margin: 16px 26px 0 26px;
  font-size: 14px;
  letter-spacing: 0.3px;
  white-space: nowrap;
  color: #1967d2;
}

.page-tabs {
  height: 58px;
  display: flex;
  gap: 32px;
  padding-left: 16px;
  border-bottom: 1px solid #dadce0;
}

.page-tab {
  height: 57px;
  border-bottom: 4px solid transparent;
  font: 14.5px/66px Lato, sans-serif;
  letter-spacing: 0.52px;
  color: #5f6368;
}

.page-tab.on {
  position: relative;
  color: #1967d2;
}

.page-tab.on::after {
  content: "";
  position: absolute;
  left: 2px;
  right: 2px;
  bottom: -4px;
  height: 4px;
  border-radius: 4px 4px 0 0;
  background-color: #1a73e8;
}

.panel {
  height: 300px;
  background-color: #fff;
}

.table-tools {
  height: 57px;
  border-bottom: 1px solid #dadce0;
  display: flex;
  align-items: center;
}

.fab-clip {
  width: 67px;
  height: 40px;
  align-self: flex-start;
  overflow: hidden;
}

.fab {
  display: block;
  width: 40px;
  height: 40px;
  margin: -22px 0 0 4px;
  border-radius: 20px;
  background: linear-gradient(#fff, #fff) center / 3px 12px no-repeat #1a73e8;
  box-shadow: 0 2px 8px rgba(60, 64, 67, 0.4);
}

.tools-filter {
  margin-left: 58px;
  font-size: 14px;
  letter-spacing: 0.5px;
  color: #5f6368;
}

.tool-list {
  margin-left: auto;
  display: grid;
  grid-template-columns: 70px 75px 73px 69px 79px 66px 55px;
}

.table-tools .action {
  gap: 3px;
}

.tools-divider {
  width: 1px;
  height: 32px;
  margin-left: 9px;
  background-color: #80868b;
}

.collapse {
  margin: 0 20px 0 28px;
}

.grid {
  display: flex;
  font-size: 12px;
}

.frozen {
  position: relative;
  width: 398px;
  flex: none;
  border-right: 1px solid #dadce0;
  box-shadow: 2px 0 4px rgba(60, 64, 67, 0.2);
}

.row {
  height: 41px;
  display: grid;
  grid-template-columns: 36px 48px 1fr;
  align-items: center;
  padding-left: 20px;
  border-bottom: 1px solid #dadce0;
}

.row.head,
.metrics thead tr {
  height: 52px;
}

.row.head {
  border-bottom-width: 2px;
  font-weight: 500;
}

.row.campaign,
.metrics .campaign {
  height: 45px;
}

.campaign {
  background-color: #f7f7f7;
}

.total {
  background-color: #f8f9fb;
}

.row .box {
  width: 16px;
  height: 16px;
  border: 2px solid #5f6368;
  border-radius: 2px;
}

.status {
  display: flex;
  align-items: center;
  gap: 5px;
}

.status.expand {
  padding-left: 3px;
}

.dot {
  width: 12px;
  height: 12px;
  border-radius: 6px;
  background-color: #5f6368;
}

.name {
  display: flex;
  align-items: center;
  letter-spacing: -0.04px;
  white-space: nowrap;
}

.name a,
.metrics a {
  color: #1a73e8;
}

.name a {
  margin-left: 10px;
  letter-spacing: 0.02px;
}

.type {
  width: 20px;
  height: 16px;
  margin-left: 2px;
  border-radius: 1px;
  background-color: #80868b;
  display: flex;
  align-items: center;
  justify-content: center;
}

.pencil {
  margin-left: 12px;
}

.cog {
  margin-left: auto;
  margin-right: 20px;
}

.tip {
  margin-left: 11px;
}

.tip.near {
  margin-left: 8px;
}

.metrics {
  width: 573px;
  table-layout: fixed;
  border-collapse: separate;
  border-spacing: 0;
}

.c-cost {
  width: 28px;
}

.c-bid {
  width: 96px;
}

.c-sm {
  width: 80px;
}

.c-conv {
  width: 121px;
}

.metrics th,
.metrics td {
  padding: 0 8px 0;
  border-right: 1px solid #dadce0;
  border-bottom: 1px solid #dadce0;
  text-align: right;
  font-weight: normal;
  line-height: 14px;
}

.metrics th {
  padding-top: 2px;
  border-bottom-width: 2px;
  font-weight: 500;
}

.metrics th:last-child,
.metrics td:last-child {
  border-right: 0;
  padding-right: 16px;
}

.metrics .left {
  text-align: left;
}

.metrics .cut {
  padding: 0 8px 0 0;
}

.cut div {
  overflow: hidden;
  display: flex;
  justify-content: flex-end;
}

.metrics u {
  text-decoration: none;
  border-bottom: 1px dashed #3c4043;
}

.h-scroll {
  width: 230px;
  height: 10px;
  margin-left: auto;
  background-color: #bdc1c6;
}

.pager {
  padding: 17px 25px 0 0;
  font-size: 13px;
  line-height: 16px;
  text-align: right;
  color: #202124;
}

.page-bar {
  width: 18px;
  padding: 7px 0 8px;
}

.page-bar .thumb {
  height: 147px;
  margin-top: 142px;
}

/* taskbar */
.taskbar {
  height: 48px;
  flex: none;
  display: flex;
  align-items: center;
  background-color: #202020;
  border-top: 1px solid #3a3a3a;
  color: #fff;
  font-family: "Open Sans", "Noto Sans", "DejaVu Sans", sans-serif;
  font-size: 12px;
}

.weather {
  width: 450px;
  display: flex;
  align-items: center;
  padding-left: 17px;
}

.weather-icon {
  position: relative;
  width: 33px;
}

.badge {
  position: absolute;
  top: -4px;
  left: 13px;
  width: 16px;
  height: 16px;
  border-radius: 8px;
  background-color: #c42b1c;
  font-size: 11px;
  font-weight: normal;
  line-height: 16px;
  text-align: center;
}

.weather-text {
  margin-top: -2px;
  line-height: 16px;
  letter-spacing: -0.3px;
}

.weather-text span {
  color: #cfcfcf;
  font-size: 12px;
}

.task-search {
  width: 218px;
  height: 30px;
  margin-left: 13px;
  border-radius: 15px;
  background-color: #f3f3f3;
  display: flex;
  align-items: center;
  gap: 10px;
  padding: 0 2px 0 10px;
  font-size: 13.5px;
  letter-spacing: -0.3px;
  color: #5c5c5c;
}

.hint {
  padding-bottom: 2px;
}

.case {
  width: 50px;
  height: 28px;
  margin-left: auto;
  border-radius: 14px;
  background-color: #e2e2e4;
  display: flex;
  align-items: center;
  justify-content: center;
}

.app {
  margin-left: 20px;
}

.app.view {
  margin-left: 12px;
}

.app.folder,
.app.chrome {
  height: 40px;
  display: flex;
  flex-direction: column;
  align-items: center;
  justify-content: space-between;
  padding: 9px 0 1px;
}

.app.folder i {
  width: 6px;
  height: 3px;
  border-radius: 2px;
  background-color: #9a9a9a;
}

.app.edge {
  margin-left: 19px;
}

.app.chrome {
  width: 38px;
  margin-left: 13px;
  padding-top: 7px;
  border-radius: 4px;
  background-color: #2d2d2d;
}

.chrome i {
  width: 16px;
  height: 3px;
  border-radius: 2px;
  background-color: #4cc2ff;
}

.tray {
  flex: 1;
  display: flex;
  align-items: center;
  justify-content: flex-end;
  padding-right: 19px;
}

.tray > * {
  margin-left: 8px;
}

.tray > :nth-child(2),
.tray > :nth-child(3) {
  margin-left: 17px;
}

.tray .lang {
  margin-left: 17px;
  margin-right: 10px;
  letter-spacing: -0.2px;
}

.clock {
  width: 58px;
  line-height: 16px;
  font-size: 10.5px;
  letter-spacing: -0.2px;
  text-align: right;
  white-space: nowrap;
}

.tray > .clock + svg {
  margin-left: 9px;
}

.tray > .copilot {
  position: relative;
  margin-left: 18px;
}

.copilot b {
  position: absolute;
  left: 5px;
  bottom: -1px;
  padding: 0 2px;
  border-radius: 2px;
  background-color: #f7c325;
  color: #202020;
  font-size: 7px;
  line-height: 8px;
}

.watermark {
  position: absolute;
  left: 600px;
  top: 670px;
  width: 165px;
  display: flex;
  flex-direction: column;
  align-items: center;
  color: #b4b8ba;
  opacity: 0.36;
  white-space: nowrap;
}

.watermark .arabic {
  font: bold 52px/56px "DejaVu Sans", sans-serif;
  transform: scaleX(0.86);
  -webkit-text-stroke: 2px #b4b8ba;
}

.watermark .latin {
  font: bold 27px/24px "Liberation Sans", sans-serif;
}
```
